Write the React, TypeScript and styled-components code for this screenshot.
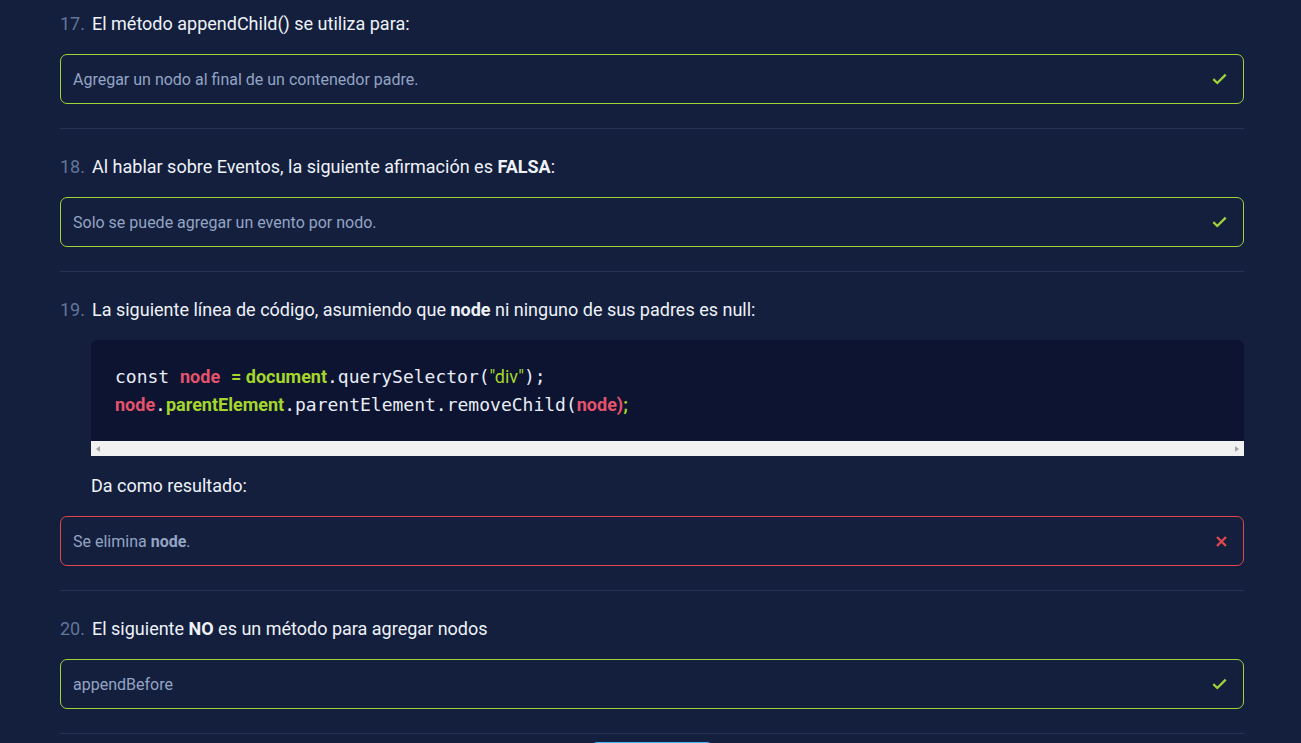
import React from "react";
import styled, { createGlobalStyle, css } from "styled-components";

const Global = createGlobalStyle`
  html, body { margin: 0; padding: 0; background: #131f3d; }
  body { font-family: Roboto, "Noto Sans", sans-serif; overflow: hidden; }
`;

const Page = styled.main`
  padding: 10px 57px 0 60px;
  min-height: 743px;
  box-sizing: border-box;
`;

const Section = styled.section`
  padding: 24px 0 24px;
  border-bottom: 1px solid #243352;
  &:first-child { padding-top: 0; }
`;

const Title = styled.h3`
  margin: 0 0 16px;
  display: flex;
  align-items: baseline;
  gap: 7px;
  font-size: 18px;
  font-weight: 400;
  line-height: 28px;
  color: #eef2f8;
  b { font-weight: 700; }
`;

const Num = styled.span`
  color: #62759a;
  font-size: 18px;
  min-width: 23px;
`;

const Indented = styled.div`
  margin-left: 31px;
`;

const Option = styled.div<{ $ok: boolean }>`
  height: 50px;
  box-sizing: border-box;
  border: 1px solid ${(p) => (p.$ok ? "#a0d23a" : "#e2474b")};
  border-radius: 7px;
  display: flex;
  align-items: center;
  justify-content: space-between;
  padding: 0 16px 0 12px;
  font-size: 16px;
  color: #93a4c4;
  b { font-weight: 700; }
`;

const Code = styled.div`
  margin: 0 0 16px;
  background: #0c1432;
  border-radius: 6px 6px 0 0;
  overflow: hidden;
`;

const CodeBody = styled.pre`
  margin: 0;
  padding: 23px 24px 22px;
  font-family: "DejaVu Sans Mono", monospace;
  font-size: 18px;
  line-height: 28px;
  color: #e8edf5;
`;

const tok = css`
  font-family: Roboto, sans-serif;
  font-size: 18px;
`;
const Red = styled.span`
  ${tok};
  font-weight: 700;
  color: #e5536b;
`;
const Green = styled.span`
  ${tok};
  font-weight: 700;
  color: #a6d62b;
`;
const Str = styled.span`
  ${tok};
  color: #a6d62b;
`;

const ScrollBar = styled.div`
  height: 15px;
  background: #f1f1f1;
  display: flex;
  align-items: center;
  justify-content: space-between;
  padding: 0 5px 0 5px;
`;

const Arrow = styled.span<{ $dir: "l" | "r" }>`
  width: 0;
  height: 0;
  border-top: 3.5px solid transparent;
  border-bottom: 3.5px solid transparent;
  ${(p) =>
    p.$dir === "l"
      ? "border-right: 4px solid #a3a3a3;"
      : "border-left: 4px solid #a3a3a3;"}
`;

const Paragraph = styled.p`
  margin: 0 0 16px;
  font-size: 18px;
  line-height: 28px;
  color: #eef2f8;
`;

const Footer = styled.div`
  display: flex;
  justify-content: center;
  padding-top: 8px;
`;

const Button = styled.button`
  width: 122px;
  height: 40px;
  border: none;
  border-radius: 6px;
  background: linear-gradient(#47b2f7, #2f8fe0);
`;

const CheckIcon = () => (
  <svg width="15" height="12" viewBox="0 0 15 12" fill="none">
    <path d="M1.3 6.2 L5.3 10 L13.7 1.6" stroke="#a0d23a" strokeWidth="2.3" />
  </svg>
);

const XIcon = () => (
  <svg width="11" height="11" viewBox="0 0 11 11" fill="none">
    <path d="M1 1 L10 10 M10 1 L1 10" stroke="#e2474b" strokeWidth="2.3" />
  </svg>
);

const Answer = ({ ok, children }: { ok: boolean; children: React.ReactNode }) => (
  <Option $ok={ok}>
    <span>{children}</span>
    {ok ? <CheckIcon /> : <XIcon />}
  </Option>
);

export default function App() {
  return (
    <>
      <Global />
      <Page>
        <Section>
          <Title>
            <Num>17.</Num>
            <span>El método appendChild() se utiliza para:</span>
          </Title>
          <Answer ok>Agregar un nodo al final de un contenedor padre.</Answer>
        </Section>
        <Section>
          <Title>
            <Num>18.</Num>
            <span>
              Al hablar sobre Eventos, la siguiente afirmación es <b>FALSA</b>:
            </span>
          </Title>
          <Answer ok>Solo se puede agregar un evento por nodo.</Answer>
        </Section>
        <Section>
          <Title>
            <Num>19.</Num>
            <span>
              La siguiente línea de código, asumiendo que <b>node</b> ni ninguno de sus padres es null:
            </span>
          </Title>
          <Indented>
            <Code>
              <CodeBody>
                {"const "}
                <Red>node</Red> <Green>= document</Green>
                {".querySelector("}
                <Str>"div"</Str>
                {");"}
                {"\n"}
                <Red>node</Red>
                {"."}
                <Green>parentElement</Green>
                {".parentElement.removeChild("}
                <Red>node</Red>
                <Red>)</Red>
                <Green>;</Green>
              </CodeBody>
              <ScrollBar>
                <Arrow $dir="l" />
                <Arrow $dir="r" />
              </ScrollBar>
            </Code>
            <Paragraph>Da como resultado:</Paragraph>
          </Indented>
          <Answer ok={false}>
            Se elimina <b>node</b>.
          </Answer>
        </Section>
        <Section>
          <Title>
            <Num>20.</Num>
            <span>
              El siguiente <b>NO</b> es un método para agregar nodos
            </span>
          </Title>
          <Answer ok>appendBefore</Answer>
        </Section>
        <Footer>
          <Button aria-label="Enviar" />
        </Footer>
      </Page>
    </>
  );
}
